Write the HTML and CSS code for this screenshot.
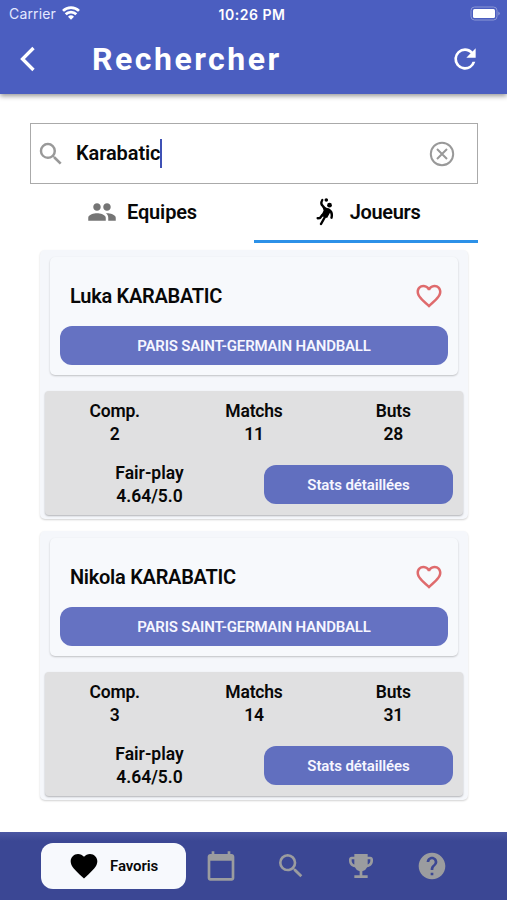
FILE: index.html
```
<!DOCTYPE html>
<html lang="fr">
<head>
<meta charset="utf-8">
<title>Rechercher</title>
<link rel="stylesheet" href="styles.css">
</head>
<body>
<svg class="defs" width="0" height="0">
  <symbol id="search" viewBox="0 0 24 24"><path d="M15.5 14h-.79l-.28-.27A6.471 6.471 0 0 0 16 9.5 6.5 6.5 0 1 0 9.5 16c1.61 0 3.09-.59 4.23-1.57l.27.28v.79l5 4.99L20.49 19l-4.99-5zm-6 0C7.01 14 5 11.99 5 9.5S7.01 5 9.5 5 14 7.01 14 9.5 11.99 14 9.5 14z"/></symbol>
  <symbol id="heart-line" viewBox="0 0 24 24"><path d="M16.5 3c-1.74 0-3.41.81-4.5 2.09C10.91 3.81 9.24 3 7.5 3 4.42 3 2 5.42 2 8.5c0 3.78 3.4 6.86 8.55 11.54L12 21.35l1.45-1.32C18.6 15.36 22 12.28 22 8.5 22 5.42 19.58 3 16.5 3zm-4.4 15.55l-.1.1-.1-.1C7.14 14.24 4 11.39 4 8.5 4 6.5 5.5 5 7.5 5c1.54 0 3.04.99 3.57 2.36h1.87C13.46 5.99 14.96 5 16.5 5c2 0 3.5 1.5 3.5 3.5 0 2.89-3.14 5.74-7.9 10.05z"/></symbol>
</svg>
<div class="screen">
  <header class="header">
    <div class="status">
      <div class="carrier"><span>Carrier</span>
        <svg width="18" height="14" viewBox="0 0 18 14" fill="none" stroke="#fff" stroke-width="2.7"><path d="M1 4.9a11.500 11.500 0 0 1 16 0M3.700 8.300a7.500 7.500 0 0 1 10.600 0"/><path d="M6 10.700a4.400 4.400 0 0 1 6 0L9 13.700z" fill="#fff" stroke="none"/></svg>
      </div>
      <time class="clock">10:26 PM</time>
      <svg class="battery" width="31" height="16" viewBox="0 0 31 16"><rect x="1" y="1" width="26" height="13" rx="3.5" fill="none" stroke="#8c97d5"/><rect x="3" y="3" width="22" height="9" rx="1.5" fill="#fff"/><path d="M28.3 5.5q3 2 0 4z" fill="#8c97d5"/></svg>
    </div>
    <div class="bar">
      <svg class="back" width="18" height="26" viewBox="0 0 18 26" fill="none" stroke="#fff" stroke-width="3.3"><path d="M15.5 2 4.5 13l11 11"/></svg>
      <h1 class="title">Rechercher</h1>
      <svg class="refresh" width="32" height="32" viewBox="0 0 24 24" fill="#fff"><path d="M17.65 6.35A7.958 7.958 0 0 0 12 4a8 8 0 1 0 7.73 10h-2.08A5.99 5.99 0 0 1 12 18a6 6 0 1 1 0-12c1.66 0 3.14.69 4.22 1.78L13 11h7V4l-2.35 2.35z"/></svg>
    </div>
  </header>

  <main class="content">
    <div class="field">
      <svg class="field-icon" width="30" height="30"><use href="#search"/></svg>
      <span class="query">Karabatic</span><span class="caret"></span>
      <svg class="clear" width="26" height="26" viewBox="0 0 26 26" fill="none" stroke="#999" stroke-width="2"><circle cx="13" cy="13" r="11.2"/><path d="m8 8 10 10M18 8 8 18"/></svg>
    </div>
    <nav class="tabs">
      <div class="tab">
        <svg class="people" width="30" height="30" viewBox="0 0 24 24" fill="#757575"><path d="M16 11c1.660 0 2.990-1.340 2.990-3S17.660 5 16 5s-3 1.340-3 3 1.340 3 3 3zm-8 0c1.660 0 2.990-1.340 2.990-3S9.660 5 8 5 5 6.340 5 8s1.340 3 3 3zm0 2c-2.330 0-7 1.170-7 3.500V19h14v-2.500c0-2.330-4.670-3.500-7-3.500zm8 0c-.29 0-.62.02-.97.05 1.160.84 1.970 1.970 1.970 3.450V19h6v-2.500c0-2.330-4.670-3.500-7-3.500z"/></svg>
        <span class="equipes">Equipes</span>
      </div>
      <div class="tab active">
        <svg class="player" width="18" height="30" viewBox="0 0 18 30"><circle cx="10.3" cy="3" r="1.8"/><circle cx="13.500" cy="8.2" r="2.400"/><path d="M6.300 3Q4 6.800 7.200 9.400l3.500 4" fill="none" stroke="#000" stroke-width="2.300" stroke-linecap="round"/><path d="M6.300 9.400 13 11.500l1.700 3-3.600 6.500-6-2 2.500-5.500z"/><path d="M13 12.700q3.800 2.300 2.500 8M9.500 19l-4.500 8M6.500 17.700l-2.500 3.300-2.300.2" fill="none" stroke="#000" stroke-width="2.400" stroke-linecap="round" stroke-linejoin="round"/></svg>
        <span class="joueurs">Joueurs</span>
      </div>
    </nav>

    <article class="card">
      <div class="identity">
        <div class="name-row"><h2 class="name">Luka KARABATIC</h2><svg class="fav" width="30" height="30"><use href="#heart-line"/></svg></div>
        <div class="club"><span>PARIS SAINT-GERMAIN HANDBALL</span></div>
      </div>
      <div class="stats">
        <div class="figures">
          <div class="figure"><span>Comp.</span><span>2</span></div>
          <div class="figure"><span>Matchs</span><span>11</span></div>
          <div class="figure"><span>Buts</span><span>28</span></div>
        </div>
        <div class="bottom">
          <div class="figure fair"><span>Fair-play</span><span>4.64/5.0</span></div>
          <div class="button"><span>Stats détaillées</span></div>
        </div>
      </div>
    </article>

    <article class="card">
      <div class="identity">
        <div class="name-row"><h2 class="name">Nikola KARABATIC</h2><svg class="fav" width="30" height="30"><use href="#heart-line"/></svg></div>
        <div class="club"><span>PARIS SAINT-GERMAIN HANDBALL</span></div>
      </div>
      <div class="stats">
        <div class="figures">
          <div class="figure"><span>Comp.</span><span>3</span></div>
          <div class="figure"><span>Matchs</span><span>14</span></div>
          <div class="figure"><span>Buts</span><span>31</span></div>
        </div>
        <div class="bottom">
          <div class="figure fair"><span>Fair-play</span><span>4.64/5.0</span></div>
          <div class="button"><span>Stats détaillées</span></div>
        </div>
      </div>
    </article>
  </main>

  <footer class="footer">
    <div class="favoris">
      <svg width="32" height="32" viewBox="0 0 24 24"><path d="M12 21.35l-1.45-1.32C5.4 15.36 2 12.28 2 8.5 2 5.42 4.42 3 7.5 3c1.74 0 3.41.81 4.5 2.09C13.09 3.81 14.76 3 16.5 3 19.58 3 22 5.42 22 8.5c0 3.78-3.4 6.86-8.55 11.54L12 21.35z"/></svg>
      <span>Favoris</span>
    </div>
    <div class="nav-item"><svg width="32" height="32" viewBox="0 0 24 24"><path d="M20 3h-1V1h-2v2H7V1H5v2H4c-1.1 0-2 .9-2 2v16c0 1.1.9 2 2 2h16c1.1 0 2-.9 2-2V5c0-1.1-.9-2-2-2zm0 18H4V8h16v13z"/></svg></div>
    <div class="nav-item"><svg width="32" height="32"><use href="#search"/></svg></div>
    <div class="nav-item"><svg width="32" height="32" viewBox="0 0 24 24"><path d="M19 5h-2V3H7v2H5c-1.1 0-2 .9-2 2v1c0 2.550 1.920 4.630 4.390 4.940A5.010 5.010 0 0 0 11 15.900V19H7v2h10v-2h-4v-3.100a5.010 5.010 0 0 0 3.610-2.960C19.080 12.630 21 10.550 21 8V7c0-1.100-.9-2-2-2zM5 8V7h2v3.820C5.840 10.400 5 9.300 5 8zm14 0c0 1.300-.84 2.400-2 2.820V7h2v1z"/></svg></div>
    <div class="nav-item"><svg width="32" height="32" viewBox="0 0 24 24"><path d="M12 2C6.480 2 2 6.480 2 12s4.480 10 10 10 10-4.480 10-10S17.520 2 12 2zm1 17h-2v-2h2v2zm2.070-7.750l-.9.920C13.450 12.900 13 13.500 13 15h-2v-.5c0-1.100.45-2.100 1.170-2.830l1.240-1.260c.37-.36.59-.86.59-1.410 0-1.100-.9-2-2-2s-2 .9-2 2H8c0-2.210 1.790-4 4-4s4 1.790 4 4c0 .88-.36 1.680-.93 2.250z"/></svg></div>
  </footer>
</div>
</body>
</html>
```
FILE: styles.css
```
* { box-sizing: border-box; }
body { margin: 0; font-family: Roboto, "Liberation Sans", sans-serif; font-weight: 600; color: #080808; background: #fff; }
svg { display: block; flex: none; }
h1, h2 { margin: 0; }
span, h1, h2, time { white-space: nowrap; }
.defs { display: none; }
.screen { width: 507px; height: 900px; display: flex; flex-direction: column; overflow: hidden; }

.header { height: 94px; flex: none; background: #4b5ec0; color: #fff; box-shadow: 0 2px 5px rgba(0,0,0,.42); }
.status { height: 28px; display: grid; grid-template-columns: 1fr auto 1fr; align-items: center; padding: 0 6px 0 9px; font-family: Inter, sans-serif; font-size: 14px; }
.carrier { display: flex; align-items: center; gap: 6px; font-weight: 400; color: #e4e8ff; letter-spacing: .15px; margin-top: -2px; }
.clock { font-weight: 600; font-size: 14px; letter-spacing: .5px; margin: 0 3px 0 -3px; }
.battery { justify-self: end; margin-top: -1px; }
.bar { height: 62px; display: flex; align-items: center; padding: 0 26px 0 18px; }
.title { font-size: 32px; line-height: 36px; font-weight: 700; letter-spacing: 2.5px; margin-left: 56px; }
.refresh { margin-left: auto; }

.content { flex: none; height: 738px; padding: 29px 29.5px 0 30px; }
.field { height: 61px; border: 1.5px solid #aaa; display: flex; align-items: center; padding: 0 22px 0 5px; }
.field-icon { fill: #999; }
.query { font-size: 20px; margin: -2px 0 0 10px; letter-spacing: -.1px; }
.caret { width: 2px; height: 29px; background: #3f51b5; }
.clear { margin-left: auto; }
.tabs { display: grid; grid-template-columns: 1fr 1fr; height: 59px; }
.tab { display: flex; align-items: center; padding: 0 0 0 57px; font-size: 20px; letter-spacing: -.15px; border-bottom: 3px solid transparent; }
.tab.active { border-color: #2c91e8; padding-left: 62px; letter-spacing: -.35px; }
.equipes { margin-left: 10px; }
.joueurs { margin-left: 16px; }

.card { height: 269px; margin: 7px 9.5px 12px 10px; padding: 7px 5px 4px 5px; border-radius: 5px; background: #f5f7fb; box-shadow: 0 1px 2px rgba(0,0,0,.18); }
.card + .card { margin-top: 12px; }
.identity { height: 118px; margin: 0 5px; padding: 20px 10px 0; border-radius: 5px; background: #f7f9fc; box-shadow: 0 1px 2px rgba(0,0,0,.22); }
.name-row { height: 49px; display: flex; align-items: flex-start; justify-content: space-between; padding: 4px 4px 0 10px; }
.name { font-size: 20px; line-height: 30px; font-weight: 600; letter-spacing: -.28px; }
.fav { fill: #df6b6d; }
.club, .button { height: 39px; border-radius: 12px; background: #6572c2; color: #f6f6ff; display: flex; align-items: center; justify-content: center; font-size: 15px; letter-spacing: -.2px; }
.stats { height: 124px; margin-top: 16px; border-radius: 4px; background: #e0e0e1; box-shadow: 0 1px 2px rgba(0,0,0,.28); padding-top: 8px; }
.figures { display: grid; grid-template-columns: repeat(3, 1fr); }
.figure { display: flex; flex-direction: column; align-items: center; font-size: 17.5px; letter-spacing: -.2px; line-height: 23px; position: relative; top: .5px; }
.bottom { display: flex; justify-content: space-between; margin-top: 16px; padding-right: 10px; }
.fair { width: 209px; letter-spacing: 0; }
.button { width: 189px; margin-top: 4px; background: #616fbf; letter-spacing: -.1px; }

.footer { height: 68px; flex: none; display: flex; align-items: center; background: linear-gradient(#4b57a3 0, #3b4794 9px); padding-left: 41px; fill: #9b9c9f; }
.favoris { width: 145px; height: 46px; border-radius: 12px; background: #f7f9fd; display: flex; align-items: center; padding-left: 27px; gap: 10px; font-size: 15px; letter-spacing: -.1px; fill: #000; }
.nav-item { width: 70.2px; display: flex; justify-content: center; }
```
